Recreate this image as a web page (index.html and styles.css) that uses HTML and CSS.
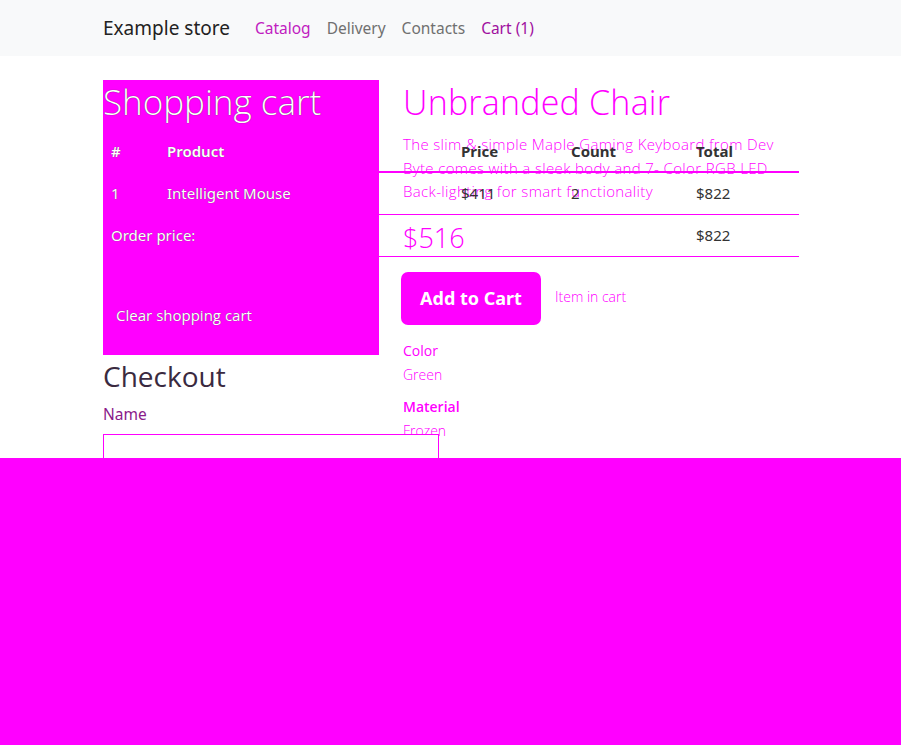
FILE: index.html
```html
<!DOCTYPE html>
<html lang="en">
<head>
<meta charset="utf-8">
<title>Example store</title>
<link rel="stylesheet" href="styles.css">
</head>
<body>
<div class="stage">
  <!-- product page layer (underneath) -->
  <div class="layer product-layer">
    <div class="nav-spacer"></div>
    <div class="container row">
      <div class="col-left">
        <div class="image-box"></div>
      </div>
      <div class="col-right">
        <h1 class="p-title">Unbranded Chair</h1>
        <p class="p-desc">The slim &amp; simple Maple Gaming Keyboard from Dev Byte comes with a sleek body and 7- Color RGB LED <span class="nowrap">Back-lighting</span> for smart functionality</p>
        <div class="p-price">$516</div>
        <div class="p-actions">
          <button class="btn-add">Add to Cart</button>
          <span class="in-cart">Item in cart</span>
        </div>
        <dl class="props">
          <dt>Color</dt>
          <dd>Green</dd>
          <dt class="strong">Material</dt>
          <dd>Frozen</dd>
        </dl>
      </div>
    </div>
  </div>

  <!-- cart page layer (on top) -->
  <div class="layer cart-layer">
    <nav class="navbar">
      <div class="container nav-inner">
        <span class="brand">Example store</span>
        <a class="nav-link active">Catalog</a>
        <a class="nav-link">Delivery</a>
        <a class="nav-link">Contacts</a>
        <a class="nav-link nav-cart">Cart (1)</a>
      </div>
    </nav>
    <main class="container cart-main">
      <h1 class="c-title">Shopping cart</h1>
      <table class="cart-table">
        <thead>
          <tr>
            <th class="c-num ghost">#</th>
            <th class="c-prod ghost">Product</th>
            <th class="c-price">Price</th>
            <th class="c-count">Count</th>
            <th class="c-total">Total</th>
          </tr>
        </thead>
        <tbody>
          <tr>
            <td class="ghost">1</td>
            <td class="ghost">Intelligent Mouse</td>
            <td>$411</td>
            <td>2</td>
            <td>$822</td>
          </tr>
          <tr>
            <td class="ghost" colspan="4">Order price:</td>
            <td>$822</td>
          </tr>
        </tbody>
      </table>
      <button class="btn-clear">Clear shopping cart</button>
      <h2 class="checkout">Checkout</h2>
      <label class="lbl">Name</label>
      <input class="inp" type="text">
    </main>
  </div>

  <!-- bottom cover layer -->
  <div class="layer cover-layer">
    <div class="cover"></div>
  </div>
</div>
</body>
</html>
```

FILE: styles.css
```css
* { box-sizing: border-box; }
html, body { margin: 0; padding: 0; }
body {
  font-family: "Noto Sans", "Open Sans", sans-serif;
  font-size: 16px;
  color: #333;
  background: #fff;
  width: 901px;
  height: 745px;
  overflow: hidden;
}
.stage {
  display: grid;
  width: 901px;
  height: 745px;
}
.layer { grid-area: 1 / 1; min-width: 0; }
.product-layer { z-index: 0; }
.cart-layer { z-index: 1; }
.cover-layer { z-index: 2; display: flex; flex-direction: column; justify-content: flex-end; pointer-events: none; }
.cover { height: 287px; background: #ff00ff; }

.container { width: 696px; margin-left: 103px; }

/* ---------- product layer ---------- */
.nav-spacer { height: 56px; }
.row { display: flex; gap: 24px; margin-top: 24px; }
.col-left { width: 276px; flex: none; }
.image-box { height: 275px; background: #ff00ff; }
.col-right { width: 396px; color: #ff00ff; }
.p-title {
  margin: 0;
  font-family: "Open Sans", sans-serif;
  font-weight: 300;
  font-size: 34px;
  line-height: 44px;
  letter-spacing: 0.2px;
}
.p-desc {
  margin: 9px 0 0;
  width: 382px;
  font-family: "Open Sans", sans-serif;
  font-weight: 300;
  font-size: 15px;
  line-height: 23.5px;
  letter-spacing: 0.35px;
}
.nowrap { white-space: nowrap; }
.p-price {
  margin-top: 15px;
  font-family: "Open Sans", sans-serif;
  font-weight: 300;
  font-size: 27px;
  line-height: 38px;
}
.p-actions { display: flex; align-items: center; gap: 14px; margin: 15px 0 0 -2px; }
.btn-add {
  width: 140px;
  height: 53px;
  border: none;
  border-radius: 7px;
  background: #ff00ff;
  color: #fff;
  font-family: "Noto Sans", sans-serif;
  font-weight: 700;
  font-size: 18px;
  padding: 0;
}
.in-cart { font-size: 14px; font-weight: 300; font-family: "Open Sans", sans-serif; margin-top: -3px; }
.props { margin: 14px 0 0; font-size: 14px; font-family: "Open Sans", sans-serif; }
.props dt { line-height: 24px; font-weight: 400; }
.props dt.strong { font-weight: 600; }
.props dd { margin: 0 0 8px; line-height: 24px; font-weight: 300; }

/* ---------- cart layer ---------- */
.navbar { height: 56px; background: #f8f9fa; }
.nav-inner { display: flex; align-items: center; height: 56px; }
.brand { font-size: 19px; color: #222; margin-right: 17px; }
.nav-link { padding: 0 8px; font-size: 15.5px; color: #707070; }
.nav-link.active { color: #c020c0; }
.nav-link.nav-cart { color: #a0109f; }

.cart-main { padding-top: 24px; }
.ghost {
  color: #fff;
  text-shadow: 0 0 1px #555;
}
.c-title {
  margin: 0;
  font-family: "Open Sans", sans-serif;
  font-weight: 300;
  font-size: 35px;
  line-height: 44px;
  color: #fff;
  text-shadow: 0 0 1px #333;
}
.cart-table {
  width: 696px;
  margin-top: 6px;
  border-collapse: collapse;
  font-size: 15px;
}
.cart-table th, .cart-table td {
  text-align: left;
  padding: 8px 8px;
  height: 42px;
  border-bottom: 1px solid #ff00ff;
  font-weight: 400;
}
.cart-table th { font-weight: 700; color: #333; border-bottom-width: 2px; }
.cart-table th.ghost { font-weight: 600; color: #fff; }
.c-num { width: 56px; }
.c-prod { width: 294px; }
.c-price { width: 110px; }
.c-count { width: 125px; }
.c-total { width: 111px; }

.btn-clear {
  display: block;
  margin-top: 40px;
  width: 162px;
  height: 37px;
  background: transparent;
  border: none;
  font-family: "Open Sans", sans-serif;
  font-size: 15px;
  color: #fff;
  text-shadow: 0 0 1px #555;
  padding: 0;
}
.checkout {
  margin: 24px 0 0;
  font-family: "Open Sans", sans-serif;
  font-weight: 400;
  font-size: 28px;
  line-height: 36px;
  color: #3a2a40;
}
.lbl { display: block; margin-top: 8px; font-size: 15.5px; color: #8a1a8a; line-height: 24px; }
.inp {
  display: block;
  margin-top: 8px;
  width: 336px;
  height: 40px;
  border: 1px solid #ff00ff;
  border-radius: 0;
  background: #fff;
}
```
